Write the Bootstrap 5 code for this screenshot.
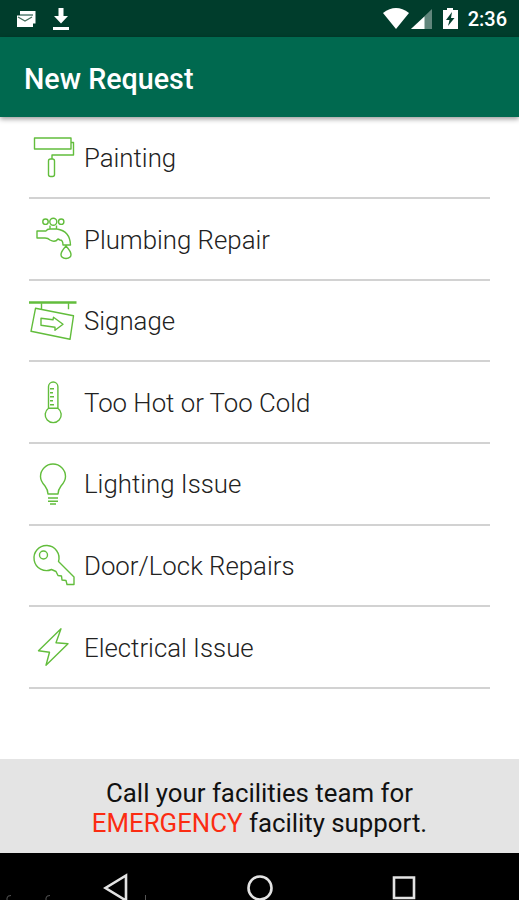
<!DOCTYPE html>
<html lang="en">
<head>
<meta charset="utf-8">
<meta name="viewport" content="width=device-width, initial-scale=1">
<title>New Request</title>
<link href="https://cdn.jsdelivr.net/npm/bootstrap@5.3.0/dist/css/bootstrap.min.css" rel="stylesheet">
<style>
body{font-family:Roboto,"Liberation Sans",sans-serif;height:900px;color:#222}
.status{height:37px;background:#003d2c;font-size:20px;font-weight:500}
.appbar{height:80px;background:#00694f;box-shadow:0 2px 5px rgba(0,0,0,.4);z-index:1}
.appbar h1{font-size:28.7px;font-weight:500;line-height:1}
.requests{padding:.7px 29px 0}
.request{height:81.6px;border-bottom:2px solid #d2d2d2;font-size:25.8px;font-weight:300;line-height:1}
.request svg{width:48px;height:80px;fill:none;stroke:#62bd3c;stroke-width:1.4;stroke-linejoin:round}
.request span{margin-left:7px;padding-top:3px}
.emergency{height:94px;background:#e4e4e4;color:#111;font-size:25.8px;line-height:30px;padding-top:19px}
.emergency em{color:#fb2c12;font-style:normal}
.navkeys{height:47px;background:#000}
svg{display:block;flex:none}
</style>
<script src="https://cdn.jsdelivr.net/npm/bootstrap@5.3.0/dist/js/bootstrap.bundle.min.js"></script>
</head>
<body class="d-flex flex-column overflow-hidden bg-white">
<div class="status d-flex justify-content-between flex-shrink-0 text-white">
  <svg width="80" height="37" viewBox="0 0 80 37" fill="#fff"><path d="M20 14.500v-3.500h15.500v12.500H33V14.500z"/><path d="M17 15.500h16v11.500H17z"/><path d="M18 17l7 4 7-4" fill="none" stroke="#47705f" stroke-width="1.300"/><path d="M58.500 8h5v8h4.500l-7 7.500-7-7.500h4.500zM53 27h16v3H53z"/></svg>
  <div class="d-flex align-items-center">
    <svg width="84" height="37" viewBox="380 0 84 37" fill="#fff"><path d="M383 13q13-10 26 0l-13 16z"/><path d="M432 9v20h-21z" opacity=".38"/><path d="M424.500 16.500V29H411z"/><path d="M443 10h4V8h6v2h5v19h-15z"/><path d="M452 12l-6 8h3.500l-1.500 6 6.500-8H451z" fill="#003d2c"/></svg>
    <span class="clock ps-1 pe-2 me-1">2:36</span>
  </div>
</div>
<header class="appbar d-flex align-items-center px-4 flex-shrink-0 position-relative text-white"><h1 class="m-0 pt-1">New Request</h1></header>
<main class="requests flex-grow-1">
  <div class="request d-flex align-items-center"><svg viewBox="29 117.500 48 80"><path d="M34.500 138.500h36.500v11H34.500zM71 143h2.500v12.500H52v4"/><rect x="48.500" y="159.500" width="6" height="17.500" rx="2"/></svg><span>Painting</span></div>
  <div class="request d-flex align-items-center"><svg viewBox="29 199 48 80"><circle cx="45.500" cy="221.700" r="2.700"/><circle cx="53.300" cy="221.700" r="3.500"/><circle cx="61.200" cy="221.700" r="2.700"/><path d="M50 225.500v3.500M56.500 225.500v3.500M37 231h9q1-2 4-2h7q13 2 13.500 16H63q0-5-3-5l-2-1q-3 4-8 1-2-2-5-2h-8zM66 246q-10 11 0 12.500 10-1.500 0-12.500z"/></svg><span>Plumbing Repair</span></div>
  <div class="request d-flex align-items-center"><svg viewBox="29 280.700 48 80"><path d="M29 302.300h47.500" stroke-width="2.500"/><path d="M41.500 303v5.500M68.500 303v6M35.500 308L73.500 315.500 70 339 31 331zM41 318l12 1.500.5-2.500 9.500 7-8 6v-3l-14-2z"/></svg><span>Signage</span></div>
  <div class="request d-flex align-items-center"><svg viewBox="29 362.300 48 80"><path d="M48.500 408.500V387a4.700 4.700 0 0 1 9.400 0v21.500a8 8 0 1 1-9.400 0zM48.500 408.500h9.400M50 389h4M50 393h3M50 397h4M50 401h3M50 405h4"/></svg><span>Too Hot or Too Cold</span></div>
  <div class="request d-flex align-items-center"><svg viewBox="29 444 48 80"><path d="M48 494q0-4-3-8-4.500-5-4.500-9.500a12.500 12.500 0 0 1 25 0q0 4.500-4.500 9.500-3 4-3 8zM48 498h10M48 501.200h10M50 504h6"/></svg><span>Lighting Issue</span></div>
  <div class="request d-flex align-items-center"><svg viewBox="29 525.500 48 80"><path d="M51.500 570a12.500 12.500 0 1 1 7-8L74 577.500v7.500h-7l-1-4-4-.5-.5-4-3.500-.5-2-4-4.500-2z"/><circle cx="43.500" cy="555.500" r="4"/></svg><span>Door/Lock Repairs</span></div>
  <div class="request d-flex align-items-center"><svg viewBox="29 606.700 48 80"><path d="M61 628.500l-22.500 22 11 1.500-3.500 13 22-21.500-12-1z"/></svg><span>Electrical Issue</span></div>
</main>
<footer class="flex-shrink-0">
  <div class="emergency text-center">Call your facilities team for<br><em>EMERGENCY</em> facility support.</div>
  <div class="navkeys"><svg width="519" height="47" viewBox="0 853 519 47" fill="none" stroke="#e3e3e3" stroke-width="2.600"><path d="M126 875.500v25l-20.500-12.500z"/><circle cx="260" cy="888" r="11.500"/><path d="M394 877.500h20v20.500h-20z"/><path d="M7 900v-2q0-2.500 4-2.500M46 900v-2q0-2.500 4-2.500M145.500 895v5" stroke="#555" stroke-width="1"/></svg></div>
</footer>
</body>
</html>
